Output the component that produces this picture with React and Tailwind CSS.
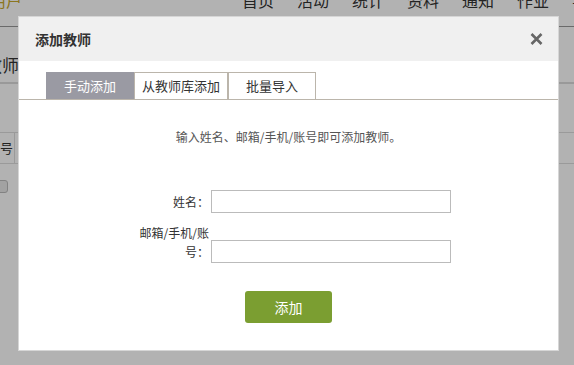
import React from "react";

const font = { fontFamily: '"Noto Sans CJK SC", "Liberation Sans", sans-serif' };

function CloseIcon() {
  return (
    <svg width="13" height="12" viewBox="0 0 13 12">
      <path d="M1.5 1 L11.5 11 M11.5 1 L1.5 11" stroke="#666" strokeWidth="2.6" strokeLinecap="butt" />
    </svg>
  );
}

export default function App() {
  return (
    <div className="relative w-[574px] h-[365px] overflow-hidden bg-white text-[#333]" style={font}>
      {/* page behind */}
      <div className="flex flex-col">
        <div className="h-[27px] border-b border-[#999] overflow-hidden">
          <div className="flex -mt-[9px] text-[16px] leading-[18px] whitespace-nowrap">
            <span className="-ml-[10px] text-[#c7a92e]">用户</span>
            <span className="ml-[220px]">首页</span>
            <span className="ml-[23px]">活动</span>
            <span className="ml-[23px]">统计</span>
            <span className="ml-[23px]">资料</span>
            <span className="ml-[23px]">通知</span>
            <span className="ml-[23px]">作业</span>
            <span className="ml-[23px]">学生</span>
          </div>
        </div>
        <div className="h-[57px] border-b-2 border-[#dcdcdc] pt-[28px] text-[17px] leading-[20px] whitespace-nowrap">
          <span className="-ml-[15px] block">教师列表</span>
        </div>
        <div className="h-[48px]" />
        <div className="h-[32px] border-y border-[#ddd] flex items-center">
          <div className="-ml-[13px] w-[28px] h-full border-r border-[#ddd] flex items-center text-[13px] whitespace-nowrap">序号</div>
        </div>
        <div className="mt-[16px] -ml-[8px] w-[16px] h-[13px] rounded-[3px] border border-[#bbb] bg-[#e8e8e8]" />
      </div>

      {/* overlay */}
      <div className="absolute inset-0 bg-black/30" />

      {/* dialog */}
      <div className="absolute left-[18px] top-[16px] w-[541px] h-[335px] bg-white border border-[#d6d6d6] flex flex-col">
        <div className="h-[44px] bg-[#f0f0f0] flex items-center justify-between pl-[16px] pr-[15px]">
          <span className="text-[14px] font-bold text-[#333]">添加教师</span>
          <CloseIcon />
        </div>
        <div className="pt-[11px]">
          <div className="flex pl-[27px] border-b border-[#bbb5ab]">
            <div className="w-[88px] h-[27px] bg-[#9a9aa3] text-white text-[13px] flex items-center justify-center">手动添加</div>
            <div className="w-[94px] h-[27px] border border-b-0 border-[#bbb5ab] text-[13px] flex items-center justify-center">从教师库添加</div>
            <div className="w-[88px] h-[27px] border border-b-0 border-[#bbb5ab] text-[13px] flex items-center justify-center">批量导入</div>
          </div>
          <div className="mt-[28px] text-center text-[12px] leading-[18px] text-[#555]">输入姓名、邮箱/手机/账号即可添加教师。</div>
          <div className="mt-[44px] pl-[120px] flex flex-col text-[12px] text-[#333]">
            <div className="flex items-center">
              <div className="w-[70px] text-right">姓名：</div>
              <div className="ml-[2px] w-[240px] h-[23px] border border-[#bbb]" />
            </div>
            <div className="mt-[10px] flex items-end">
              <div className="w-[70px] text-right leading-[19px] mb-[2px]">邮箱/手机/账号：</div>
              <div className="ml-[2px] w-[240px] h-[23px] border border-[#bbb]" />
            </div>
          </div>
          <div className="mt-[28px] flex justify-center">
            <button className="w-[87px] h-[32px] rounded-[3px] bg-[#7b9e31] text-white text-[14px]">添加</button>
          </div>
        </div>
      </div>
    </div>
  );
}
